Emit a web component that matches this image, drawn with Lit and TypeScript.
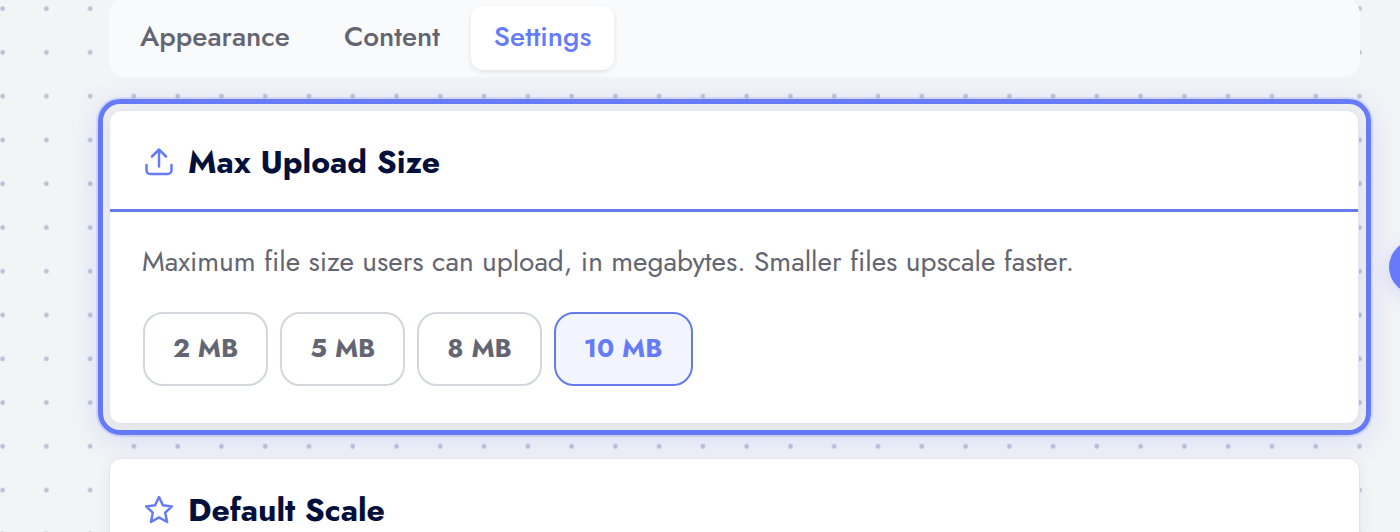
import { LitElement, html, css, svg } from "lit";
import { customElement, property, state } from "lit/decorators.js";

const uploadIcon = svg`
  <path d="M1.5 17v5.5a3.5 3.5 0 0 0 3.5 3.5h18a3.5 3.5 0 0 0 3.5-3.5V17" />
  <path d="M14 18.5V2M7 8.5l7-7 7 7" />`;

const starIcon = svg`
  <path d="M14 1l3.9 8.3 9 1.1-6.7 6.3 1.9 9.3-8.1-4.6-8.1 4.6 1.9-9.3L1.1 10.4l9-1.1z" />`;

@customElement("dot-grid")
export class DotGrid extends LitElement {
  static styles = css`
    :host {
      position: absolute;
      inset: 0;
      z-index: -1;
    }
    .grid {
      display: block;
      width: 100%;
      height: 100%;
    }
    .dot {
      fill: #b9c3d6;
    }
  `;

  render() {
    return html`
      <svg class="grid" viewBox="0 0 1400 532" preserveAspectRatio="xMinYMin slice" aria-hidden="true">
        <defs>
          <pattern id="dots" width="43.77" height="43.77" patternUnits="userSpaceOnUse">
            <circle class="dot" cx="2.6" cy="8.7" r="2.4" />
          </pattern>
        </defs>
        <rect width="1400" height="532" fill="url(#dots)" />
      </svg>
    `;
  }
}

@customElement("setting-card")
export class SettingCard extends LitElement {
  static styles = css`
    :host {
      display: block;
    }
    .card {
      background: #fff;
      border: 1px solid #e2e5ef;
      border-radius: 12px;
      box-shadow: 0 4px 16px rgba(30, 35, 60, 0.06);
    }
    .header {
      display: flex;
      align-items: center;
      gap: 15px;
      padding: 33px 35px 29px;
      border-bottom: 3px solid #667bea;
    }
    .icon {
      flex: none;
      width: 28px;
      height: 28px;
      fill: none;
      stroke: #667bf5;
      stroke-width: 2.5;
      stroke-linecap: round;
      stroke-linejoin: round;
    }
    .title {
      margin: 0;
      font-size: 32px;
      line-height: 36px;
      font-weight: 700;
      color: #04103a;
    }
    .body {
      padding: 32px;
    }
  `;

  @property() heading = "";
  @property({ attribute: false }) icon: unknown;

  render() {
    return html`
      <section class="card">
        <header class="header">
          <svg class="icon" viewBox="0 0 28 28" aria-hidden="true">${this.icon}</svg>
          <h2 class="title">${this.heading}</h2>
        </header>
        <div class="body"><slot></slot></div>
      </section>
    `;
  }
}

@customElement("app-root")
export class AppRoot extends LitElement {
  static styles = css`
    :host {
      display: block;
      position: relative;
      z-index: 0;
      height: 100vh;
      overflow: hidden;
      background: #f3f4f6;
      font-family: Jost, Lato, "Open Sans", sans-serif;
      color: #636672;
    }
    .page {
      margin: -2px 40px 0 109px;
    }
    .tabs {
      position: relative;
      z-index: 1;
      display: flex;
      gap: 8px;
      padding: 8px 8px 7px;
      border-radius: 16px;
      background: #f9fafb;
    }
    .tab,
    .option {
      font: inherit;
      color: inherit;
      cursor: pointer;
    }
    .tab {
      padding: 0 23px 2px;
      border: 0;
      border-radius: 12px;
      background: none;
      font-size: 28px;
      line-height: 62px;
      font-weight: 500;
    }
    .tab.active {
      background: #fff;
      color: #667bf8;
      box-shadow: 0 2px 5px rgba(20, 25, 50, 0.1);
    }
    .highlight {
      margin: 22px -11px 23px;
      padding: 6px 7px 6px 6px;
      border: 5px solid #677bfa;
      border-radius: 22px;
      background: rgba(60, 60, 80, 0.03);
      box-shadow:
        0 0 0 2px rgba(103, 123, 250, 0.18),
        0 6px 30px rgba(103, 123, 250, 0.2);
    }
    .note {
      margin: 0;
      font-size: 28px;
      line-height: 36px;
    }
    .options {
      display: flex;
      gap: 12px;
      margin: 32px 1px 5px;
    }
    .option {
      padding: 0 28px 2px;
      border: 2px solid #d3d6db;
      border-radius: 20px;
      background: #fff;
      font-size: 26px;
      line-height: 68px;
      font-weight: 700;
    }
    .option.active {
      border-color: #667bea;
      background: #f2f4ff;
      color: #667bf8;
    }
    .help {
      position: absolute;
      top: 240px;
      right: -43px;
      width: 54px;
      height: 54px;
      padding: 0;
      border: 0;
      border-radius: 50%;
      background: #677bfa;
      box-shadow: 0 4px 16px rgba(103, 123, 250, 0.25);
    }
  `;

  @state() private tab = "Settings";
  @state() private size = 10;

  render() {
    return html`
      <dot-grid></dot-grid>
      <main class="page">
        <nav class="tabs" role="tablist">
          ${["Appearance", "Content", "Settings"].map(
            (name) => html`<button
              class="tab ${name === this.tab ? "active" : ""}"
              role="tab"
              aria-selected=${name === this.tab}
              @click=${() => (this.tab = name)}
            >${name}</button>`
          )}
        </nav>
        <div class="highlight">
          <setting-card heading="Max Upload Size" .icon=${uploadIcon}>
            <p class="note">Maximum file size users can upload, in megabytes. Smaller files upscale faster.</p>
            <div class="options">
              ${[2, 5, 8, 10].map(
                (mb) => html`<button
                  class="option ${mb === this.size ? "active" : ""}"
                  aria-pressed=${mb === this.size}
                  @click=${() => (this.size = mb)}
                >${mb} MB</button>`
              )}
            </div>
          </setting-card>
        </div>
        <setting-card heading="Default Scale" .icon=${starIcon}></setting-card>
      </main>
      <button class="help"></button>
    `;
  }
}
